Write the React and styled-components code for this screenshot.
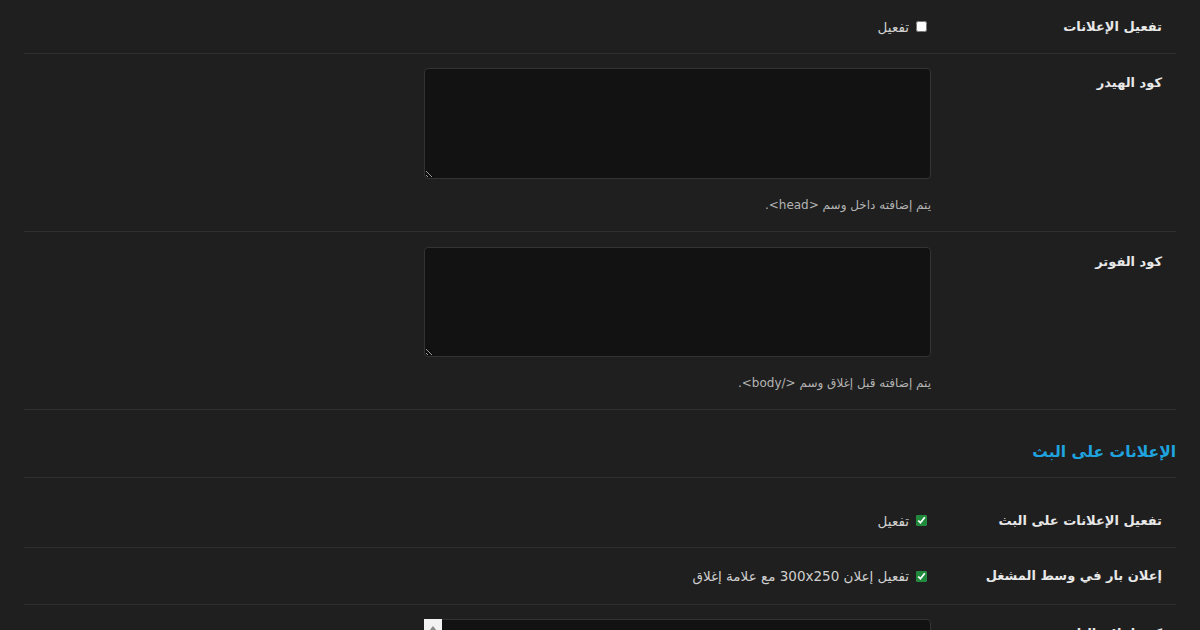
import React from 'react'
import styled, { createGlobalStyle } from 'styled-components'

const GlobalStyle = createGlobalStyle`
  html, body {
    margin: 0;
    padding: 0;
    background: #1f1f1f;
    overflow: hidden;
  }
  body {
    font-family: "DejaVu Sans", "Noto Sans", sans-serif;
    color: #e6e6e6;
  }
`

const Page = styled.div`
  direction: rtl;
  padding: 0 24px;
  height: 630px;
  overflow: hidden;
`

const Row = styled.div`
  display: grid;
  grid-template-columns: 245px 507px 1fr;
  border-bottom: 1px solid #2f2f2f;
  padding: ${p => p.$pad || '0'};
  min-height: ${p => p.$min || '0'};
  align-items: ${p => (p.$center ? 'center' : 'start')};
`

const Label = styled.div`
  padding-right: 14px;
  font-size: 13px;
  font-weight: bold;
  color: #e8e8e8;
  line-height: 18px;
  padding-top: ${p => p.$top || '0'};
`

const Field = styled.div`
  display: flex;
  flex-direction: column;
  position: relative;
`

const CheckLabel = styled.label`
  display: flex;
  align-items: center;
  gap: 7px;
  font-size: 13.5px;
  color: #d0d0d0;
  padding-right: 4px;
`

const Check = styled.input`
  margin: 0;
  width: 11px;
  height: 11px;
  accent-color: #1f8a3c;
`

const Code = styled.textarea`
  box-sizing: border-box;
  width: 507px;
  height: ${p => p.$h || '111px'};
  background: #121212;
  border: 1px solid #333;
  border-radius: 4px;
  color: #ddd;
  resize: vertical;
  margin: 0;
`

/* scrollbar "up" button of the last textarea (scrollbars are hidden in the capture) */
const ScrollUp = styled.span`
  position: absolute;
  left: 0;
  top: 0;
  width: 18px;
  height: 18px;
  background: #f2f2f2;
  display: flex;
  align-items: center;
  justify-content: center;

  &::after {
    content: '';
    border-left: 4px solid transparent;
    border-right: 4px solid transparent;
    border-bottom: 5px solid #8a8a8a;
  }
`

const Hint = styled.p`
  margin: 19px 0 0;
  font-size: 12px;
  color: #b4b4b4;
  line-height: 15px;
`

const SectionTitle = styled.h2`
  margin: 0;
  padding: 32px 0 15px;
  font-size: 15.5px;
  font-weight: bold;
  color: #1fa3df;
  border-bottom: 1px solid #2f2f2f;
  line-height: 20px;
`

export default function App() {
  return (
    <Page>
      <GlobalStyle />
      <Row $center $min="53px">
        <Label>تفعيل الإعلانات</Label>
        <Field>
          <CheckLabel>
            <Check type="checkbox" />
            تفعيل
          </CheckLabel>
        </Field>
      </Row>

      <Row $pad="14px 0 18px">
        <Label $top="6px">كود الهيدر</Label>
        <Field>
          <Code />
          <Hint>يتم إضافته داخل وسم &lt;head&gt;.</Hint>
        </Field>
      </Row>

      <Row $pad="15px 0 18px">
        <Label $top="6px">كود الفوتر</Label>
        <Field>
          <Code $h="110px" />
          <Hint>يتم إضافته قبل إغلاق وسم &lt;/body&gt;.</Hint>
        </Field>
      </Row>

      <SectionTitle>الإعلانات على البث</SectionTitle>

      <Row $center $pad="28px 0 12px" $min="29px">
        <Label>تفعيل الإعلانات على البث</Label>
        <Field>
          <CheckLabel>
            <Check type="checkbox" defaultChecked />
            تفعيل
          </CheckLabel>
        </Field>
      </Row>

      <Row $center $min="56px">
        <Label>إعلان بار في وسط المشغل</Label>
        <Field>
          <CheckLabel>
            <Check type="checkbox" defaultChecked />
            تفعيل إعلان 300x250 مع علامة إغلاق
          </CheckLabel>
        </Field>
      </Row>

      <Row $pad="14px 0 18px">
        <Label $top="6px">كود إعلان البار</Label>
        <Field>
          <Code />
          <ScrollUp />
        </Field>
      </Row>
    </Page>
  )
}
